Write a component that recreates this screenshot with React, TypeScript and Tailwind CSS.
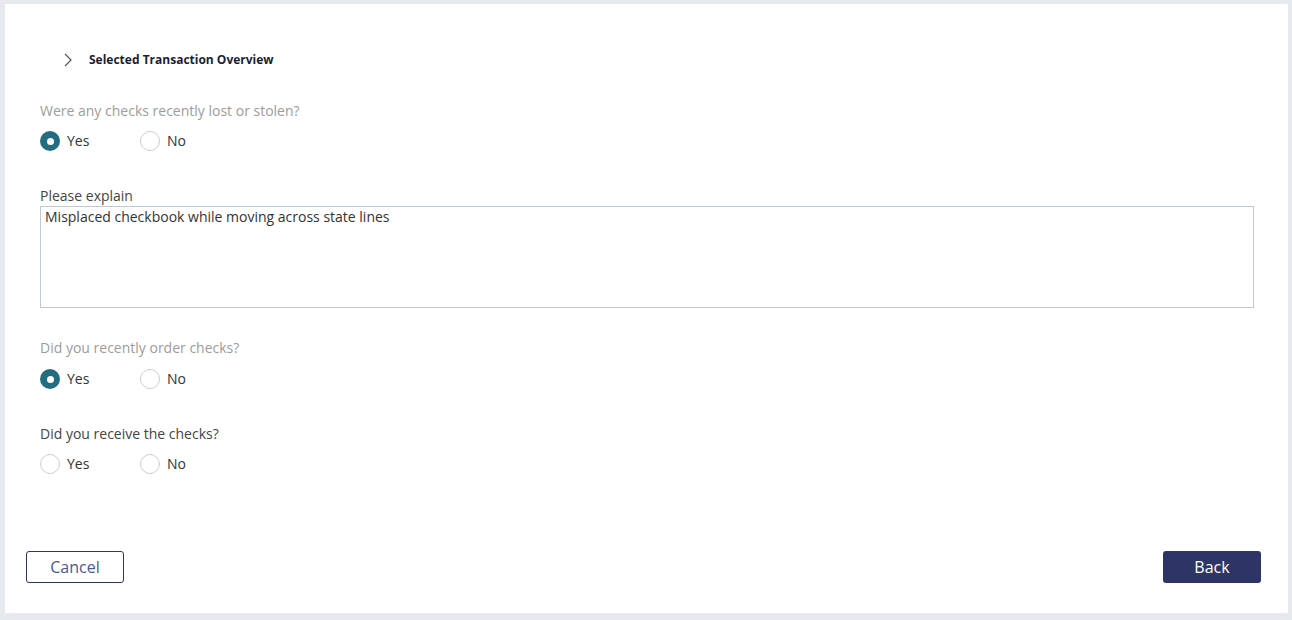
import { useState } from 'react'

type Choice = 'yes' | 'no' | null

function Radio({ checked, label }: { checked: boolean; label: string }) {
  return (
    <div className="flex items-center gap-[7px] w-[100px]">
      {checked ? (
        <span className="flex h-[20px] w-[20px] items-center justify-center rounded-full bg-[#226e80]">
          <span className="h-[7px] w-[7px] rounded-full bg-white" />
        </span>
      ) : (
        <span className="h-[20px] w-[20px] rounded-full border border-[#c9ced6] bg-white" />
      )}
      <span className="text-[14px] leading-[20px] text-[#333]">{label}</span>
    </div>
  )
}

function RadioGroup({ value }: { value: Choice }) {
  return (
    <div className="flex h-[20px] items-center">
      <Radio checked={value === 'yes'} label="Yes" />
      <Radio checked={value === 'no'} label="No" />
    </div>
  )
}

export default function App() {
  const [explain] = useState('Misplaced checkbook while moving across state lines')

  return (
    <div
      className="h-[620px] w-[1292px] bg-[#e6eaee] pt-[4px] pl-[5px] pr-[4px] pb-[7px]"
      style={{ fontFamily: '"Open Sans", "Liberation Sans", sans-serif' }}
    >
      <div className="flex h-full flex-col bg-white">
        <div className="mt-[46px] flex h-[20px] items-center pl-[59px]">
          <svg width="8" height="14" viewBox="0 0 8 14">
            <path d="M1 1 L7 7 L1 13" fill="none" stroke="#555" strokeWidth="1.2" />
          </svg>
          <span className="ml-[17px] text-[12px] font-bold text-[#1b1f33]">
            Selected Transaction Overview
          </span>
        </div>

        <div className="flex flex-col pl-[35px] pr-[34px]">
          <div className="mt-[31px] text-[14px] leading-[20px] text-[#9c9c9c]">
            Were any checks recently lost or stolen?
          </div>
          <div className="mt-[10px]">
            <RadioGroup value="yes" />
          </div>

          <div className="mt-[35px] text-[14px] leading-[20px] text-[#444]">Please explain</div>
          <div className="h-[102px] border border-[#c3c8d0] px-[4px] text-[14px] leading-[20px] text-[#333]">
            {explain}
          </div>

          <div className="mt-[30px] text-[14px] leading-[20px] text-[#9c9c9c]">
            Did you recently order checks?
          </div>
          <div className="mt-[11px]">
            <RadioGroup value="yes" />
          </div>

          <div className="mt-[35px] text-[14px] leading-[20px] text-[#444]">
            Did you receive the checks?
          </div>
          <div className="mt-[10px]">
            <RadioGroup value={null} />
          </div>
        </div>

        <div className="mt-[77px] flex items-center justify-between pl-[21px] pr-[27px]">
          <button className="h-[32px] w-[98px] rounded-[3px] border border-[#2e3566] bg-white text-[16px] text-[#4a5796]">
            Cancel
          </button>
          <button className="h-[32px] w-[98px] rounded-[3px] bg-[#2d3566] text-[16px] text-white">
            Back
          </button>
        </div>
      </div>
    </div>
  )
}
